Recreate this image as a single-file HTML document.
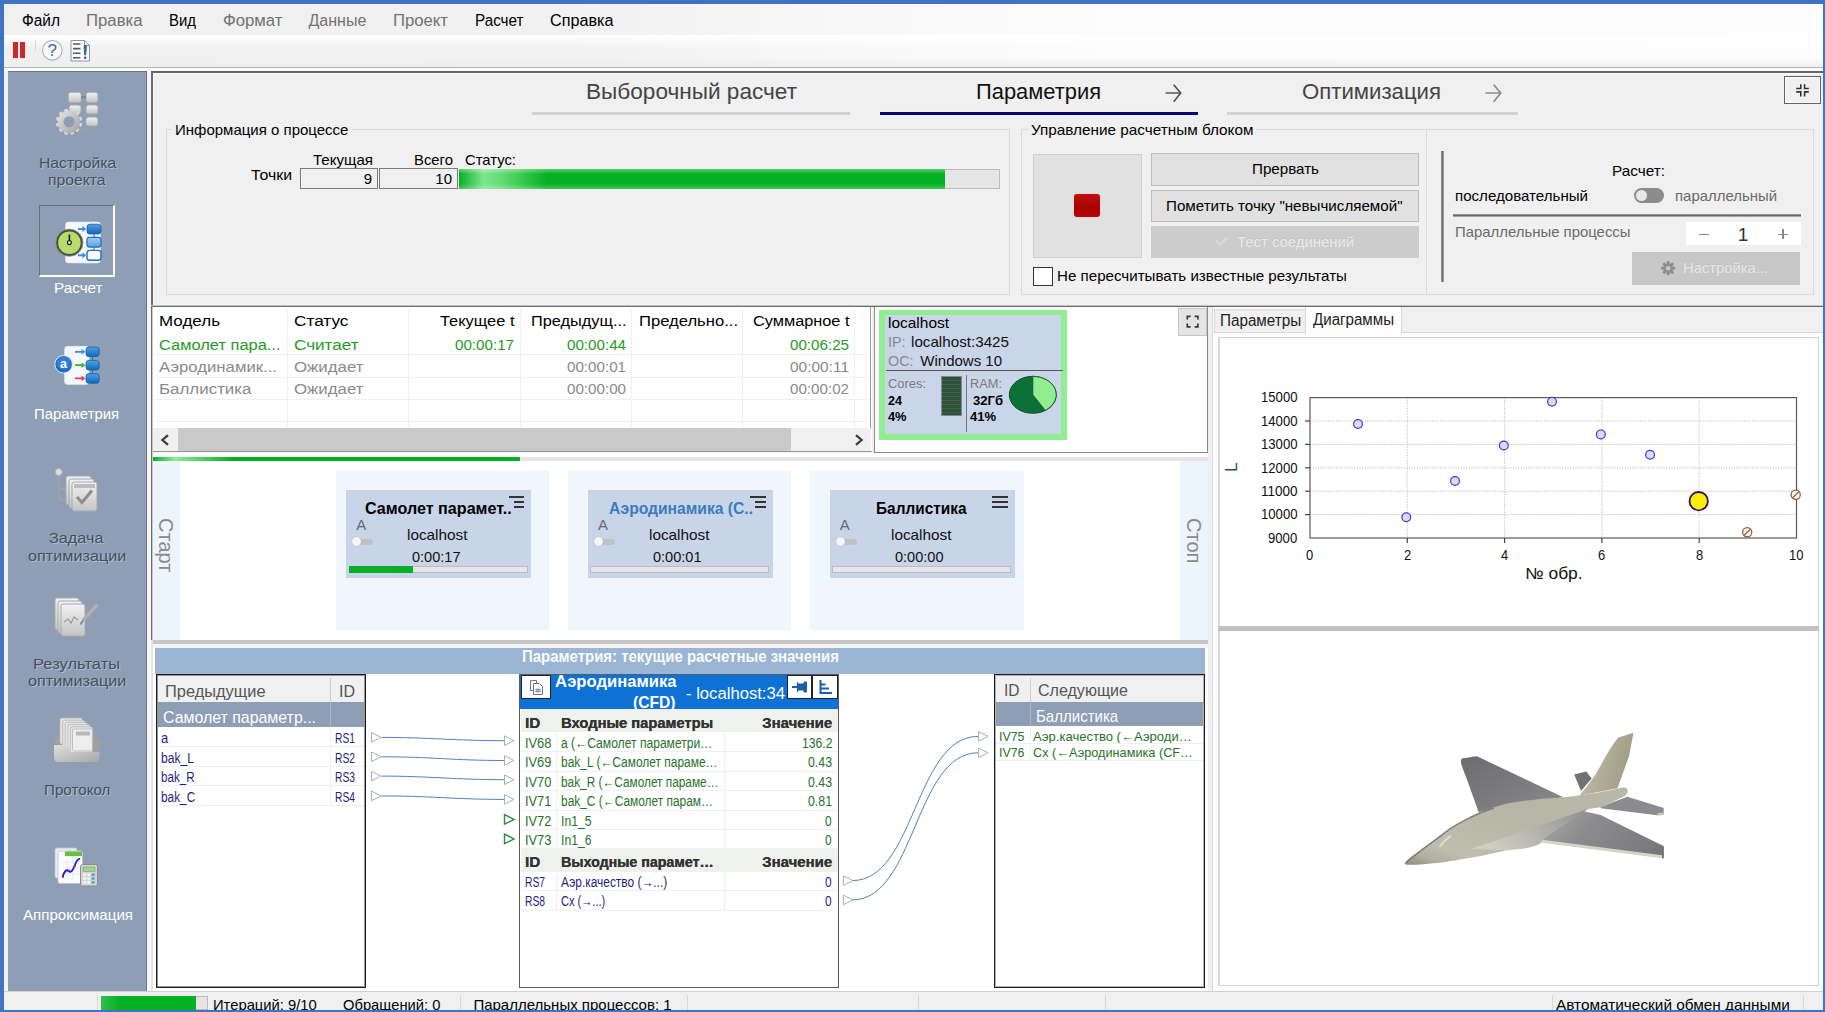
<!DOCTYPE html>
<html lang="ru"><head><meta charset="utf-8"><title>Параметрия</title>
<style>
html,body{margin:0;padding:0}
body{width:1825px;height:1012px;position:relative;overflow:hidden;background:#f0f0f0;font-family:"Liberation Sans",sans-serif}
.a{position:absolute;box-sizing:border-box}
.t{position:absolute;white-space:pre;line-height:1;transform-origin:0 0;display:block}
svg{position:absolute;overflow:visible}
</style></head><body>
<div class="a" style="left:0px;top:0px;width:1825px;height:1012px;background:#3f74c2;"></div>
<div class="a" style="left:4px;top:4px;width:1819px;height:1006px;background:#f0f0f0;"></div>
<div class="a" style="left:4px;top:4px;width:1819px;height:31px;background:linear-gradient(90deg,#f0f0f0 0,#f1f1f1 560px,#f7f7f7 800px,#fcfcfc 1100px,#fdfdfd 1819px);"></div>
<span class="t" style="left:21.50px;top:13.36px;font-size:16px;color:#000;transform:scaleX(0.9658);">Файл</span>
<span class="t" style="left:86.00px;top:13.36px;font-size:16px;color:#727272;transform:scaleX(1.0454);">Правка</span>
<span class="t" style="left:169.00px;top:13.36px;font-size:16px;color:#000;transform:scaleX(0.9325);">Вид</span>
<span class="t" style="left:222.50px;top:13.36px;font-size:16px;color:#727272;transform:scaleX(1.0467);">Формат</span>
<span class="t" style="left:308.50px;top:13.36px;font-size:16px;color:#727272;">Данные</span>
<span class="t" style="left:393.00px;top:13.36px;font-size:16px;color:#727272;transform:scaleX(1.0436);">Проект</span>
<span class="t" style="left:475.00px;top:13.36px;font-size:16px;color:#000;transform:scaleX(0.9530);">Расчет</span>
<span class="t" style="left:550.00px;top:13.36px;font-size:16px;color:#000;transform:scaleX(1.0117);">Справка</span>
<div class="a" style="left:4px;top:35px;width:1819px;height:33px;background:linear-gradient(90deg,#f0f0f0 0,#f1f1f1 560px,#f7f7f7 800px,#fcfcfc 1100px,#fdfdfd 1819px);"></div>
<div class="a" style="left:4px;top:35px;width:1819px;height:14px;background:linear-gradient(180deg,rgba(255,255,255,1) 0,rgba(255,255,255,.6) 5px,rgba(255,255,255,0) 14px);"></div>
<div class="a" style="left:4px;top:58px;width:1819px;height:9px;background:linear-gradient(180deg,rgba(240,240,240,0) 0,rgba(238,238,238,1) 9px);"></div>
<div class="a" style="left:4px;top:67px;width:1819px;height:1px;background:#b4b4b4;"></div>
<div class="a" style="left:4px;top:68px;width:1819px;height:3px;background:#fbfbfb;"></div>
<div class="a" style="left:13px;top:42px;width:5px;height:16px;background:#d0272b;"></div>
<div class="a" style="left:20px;top:42px;width:5px;height:16px;background:#d0272b;"></div>
<div class="a" style="left:35px;top:40px;width:1px;height:11px;background:#d8d8d8;"></div>
<div class="a" style="left:4px;top:71px;width:4px;height:921px;background:#f0f0f0;"></div>
<div class="a" style="left:8px;top:71px;width:139px;height:921px;background:#8e9fb5;"></div>
<div class="a" style="left:147px;top:71px;width:4px;height:921px;background:#f7f7f7;"></div>
<div class="a" style="left:8px;top:71px;width:139px;height:1px;background:#6a7586;"></div>
<div class="a" style="left:151px;top:71px;width:1672px;height:237px;background:#f0f0f0;border-left:2px solid #6a6a6a;border-top:2px solid #666;box-shadow:inset 1px 1px 0 #fbfbfb;"></div>
<div class="a" style="left:151px;top:306px;width:1672px;height:1px;background:#6a6a6a;"></div>
<div class="a" style="left:151px;top:305px;width:1672px;height:1px;background:#c4c4c4;"></div>
<span class="t" style="left:586.00px;top:80.98px;font-size:22px;color:#444;transform:scaleX(1.0272);">Выборочный расчет</span>
<div class="a" style="left:532px;top:112px;width:318px;height:3px;background:#d2d2d2;"></div>
<span class="t" style="left:975.50px;top:80.98px;font-size:22px;color:#111;transform:scaleX(0.9947);">Параметрия</span>
<div class="a" style="left:880px;top:112px;width:318px;height:3px;background:#06067a;"></div>
<span class="t" style="left:1301.50px;top:80.98px;font-size:22px;color:#444;transform:scaleX(1.0077);">Оптимизация</span>
<div class="a" style="left:1227px;top:112px;width:291px;height:3px;background:#d2d2d2;"></div>
<div class="a" style="left:1784px;top:76px;width:37px;height:28px;background:#f0f0f0;border:1px solid #626262;box-shadow:inset 0 0 0 1px #fafafa;"></div>
<div class="a" style="left:166px;top:129px;width:844px;height:166px;border:1px solid #dcdcdc;"></div>
<div class="a" style="left:172px;top:120px;width:180px;height:20px;background:#f0f0f0;"></div>
<span class="t" style="left:175.00px;top:122.30px;font-size:15px;color:#000;">Информация о процессе</span>
<span class="t" style="left:312.50px;top:152.30px;font-size:15px;color:#000;transform:scaleX(1.0050);">Текущая</span>
<span class="t" style="left:413.50px;top:152.30px;font-size:15px;color:#000;transform:scaleX(0.9913);">Всего</span>
<span class="t" style="left:465.00px;top:152.30px;font-size:15px;color:#000;transform:scaleX(0.9885);">Статус:</span>
<span class="t" style="left:251.00px;top:166.80px;font-size:15px;color:#000;transform:scaleX(1.0576);">Точки</span>
<div class="a" style="left:300px;top:168px;width:78px;height:21px;background:#f0f0f0;border:1px solid #7a7a7a;"></div>
<div class="a" style="left:379px;top:168px;width:79px;height:21px;background:#f0f0f0;border:1px solid #7a7a7a;"></div>
<span class="t" style="left:363.66px;top:171.30px;font-size:15px;color:#000;">9</span>
<span class="t" style="left:435.31px;top:171.30px;font-size:15px;color:#000;">10</span>
<div class="a" style="left:459px;top:169px;width:541px;height:20px;background:#e6e6e6;border:1px solid #bcbcbc;"></div>
<div class="a" style="left:459px;top:169px;width:486px;height:20px;background:linear-gradient(90deg,#06b025 0%,#7fe58f 5%,#5fdc72 9%,#06b025 18%,#06b025 100%);"></div>
<div class="a" style="left:459px;top:169px;width:486px;height:20px;background:linear-gradient(180deg,rgba(255,255,255,.35) 0%,rgba(255,255,255,0) 25%,rgba(255,255,255,0) 75%,rgba(255,255,255,.25) 100%);"></div>
<div class="a" style="left:1021px;top:129px;width:406px;height:166px;border:1px solid #dcdcdc;"></div>
<div class="a" style="left:1426px;top:129px;width:388px;height:166px;border:1px solid #dcdcdc;"></div>
<div class="a" style="left:1028px;top:120px;width:228px;height:20px;background:#f0f0f0;"></div>
<span class="t" style="left:1031.00px;top:122.30px;font-size:15px;color:#000;transform:scaleX(1.0196);">Управление расчетным блоком</span>
<div class="a" style="left:1033px;top:154px;width:109px;height:104px;background:#e1e1e1;border:1px solid #cfcfcf;"></div>
<div class="a" style="left:1074px;top:194px;width:26px;height:23px;border-radius:3px;background:linear-gradient(180deg,#c21010 0%,#a80000 60%,#b80808 100%);box-shadow:0 0 1px #d88;"></div>
<div class="a" style="left:1151px;top:153px;width:268px;height:33px;background:#e1e1e1;border:1px solid #bdbdbd;"></div>
<span class="t" style="left:1252.00px;top:161.30px;font-size:15px;color:#000;transform:scaleX(1.0104);">Прервать</span>
<div class="a" style="left:1151px;top:190px;width:268px;height:32px;background:#e1e1e1;border:1px solid #bdbdbd;"></div>
<span class="t" style="left:1166.25px;top:197.70px;font-size:15px;color:#000;transform:scaleX(1.0095);">Пометить точку &quot;невычисляемой&quot;</span>
<div class="a" style="left:1151px;top:226px;width:268px;height:32px;background:#cccccc;"></div>
<span class="t" style="left:1237.00px;top:233.90px;font-size:15px;color:#e9e9e9;transform:scaleX(0.9913);text-shadow:-0.6px -0.6px 0 #c4c4c4;">Тест соединений</span>
<svg class="a" style="left:1214px;top:234px" width="14" height="12" viewBox="0 0 14 12"><path d="M1.5 6 L6 10.5 L13 4" fill="none" stroke="#dcdcdc" stroke-width="1.8"/></svg>
<div class="a" style="left:1033px;top:267px;width:20px;height:19px;background:#fff;border:1px solid #333;"></div>
<span class="t" style="left:1057.00px;top:268.10px;font-size:15px;color:#000;transform:scaleX(1.0080);">Не пересчитывать известные результаты</span>
<div class="a" style="left:1441px;top:151px;width:3px;height:131px;background:linear-gradient(90deg,#b0b0b0,#6a6a6a 40%,#6a6a6a 60%,#c8c8c8);"></div>
<span class="t" style="left:1612.00px;top:163.30px;font-size:15px;color:#000;transform:scaleX(1.0214);">Расчет:</span>
<span class="t" style="left:1455.00px;top:188.30px;font-size:15px;color:#000;transform:scaleX(1.0060);">последовательный</span>
<div class="a" style="left:1634px;top:188px;width:30px;height:15px;background:#8c8c8c;border-radius:8px;"></div>
<div class="a" style="left:1636px;top:190px;width:11px;height:11px;background:#e8e8e8;border-radius:6px;"></div>
<span class="t" style="left:1675.00px;top:188.30px;font-size:15px;color:#6a6a6a;transform:scaleX(0.9950);">параллельный</span>
<div class="a" style="left:1453px;top:214px;width:348px;height:3px;background:linear-gradient(180deg,#b0b0b0,#6a6a6a 40%,#6a6a6a 60%,#d0d0d0);"></div>
<span class="t" style="left:1455.00px;top:224.30px;font-size:15px;color:#6a6a6a;transform:scaleX(0.9935);">Параллельные процессы</span>
<div class="a" style="left:1686px;top:222px;width:115px;height:23px;background:#fff;"></div>
<div class="a" style="left:1699px;top:233.5px;width:10px;height:1.5px;background:#8a8a8a;"></div>
<span class="t" style="left:1737.71px;top:224.52px;font-size:19px;color:#333;">1</span>
<div class="a" style="left:1778px;top:233.5px;width:10px;height:1.5px;background:#8a8a8a;"></div>
<div class="a" style="left:1782.3px;top:229px;width:1.5px;height:10px;background:#8a8a8a;"></div>
<div class="a" style="left:1632px;top:252px;width:168px;height:33px;background:#c8c8c8;"></div>
<span class="t" style="left:1683.00px;top:260.30px;font-size:15px;color:#e6e6e6;transform:scaleX(0.9843);text-shadow:-0.6px -0.6px 0 #c0c0c0;">Настройка...</span>
<div class="a" style="left:153px;top:307px;width:719px;height:145px;background:#fff;"></div>
<div class="a" style="left:151px;top:307px;width:1px;height:333px;background:#6a6a6a;"></div>
<div class="a" style="left:152px;top:307px;width:1px;height:333px;background:#c8c8c8;"></div>
<div class="a" style="left:151px;top:640px;width:2px;height:352px;background:#e4e4e4;"></div>
<div class="a" style="left:153px;top:451px;width:719px;height:1px;background:#9a9a9a;"></div>
<div class="a" style="left:870px;top:307px;width:1px;height:145px;background:#9a9a9a;"></div>
<div class="a" style="left:287px;top:309px;width:1px;height:119px;background:#f0f0f0;"></div>
<div class="a" style="left:408px;top:309px;width:1px;height:119px;background:#f0f0f0;"></div>
<div class="a" style="left:520px;top:309px;width:1px;height:119px;background:#f0f0f0;"></div>
<div class="a" style="left:631px;top:309px;width:1px;height:119px;background:#f0f0f0;"></div>
<div class="a" style="left:742px;top:309px;width:1px;height:119px;background:#f0f0f0;"></div>
<div class="a" style="left:854px;top:309px;width:1px;height:119px;background:#f0f0f0;"></div>
<div class="a" style="left:154px;top:354px;width:716px;height:1px;background:#f0f0f0;"></div>
<div class="a" style="left:154px;top:377px;width:716px;height:1px;background:#f0f0f0;"></div>
<div class="a" style="left:154px;top:399px;width:716px;height:1px;background:#f0f0f0;"></div>
<div class="a" style="left:154px;top:421px;width:716px;height:1px;background:#f0f0f0;"></div>
<span class="t" style="left:159.20px;top:314.45px;font-size:14px;color:#000;transform:scaleX(1.2136);">Модель</span>
<span class="t" style="left:293.60px;top:314.45px;font-size:14px;color:#000;transform:scaleX(1.2312);">Статус</span>
<span class="t" style="left:439.80px;top:314.45px;font-size:14px;color:#000;transform:scaleX(1.1724);">Текущее t</span>
<span class="t" style="left:530.70px;top:314.45px;font-size:14px;color:#000;transform:scaleX(1.1657);">Предыдущ...</span>
<span class="t" style="left:638.50px;top:314.45px;font-size:14px;color:#000;transform:scaleX(1.1861);">Предельно...</span>
<span class="t" style="left:752.50px;top:314.45px;font-size:14px;color:#000;transform:scaleX(1.1646);">Суммарное t</span>
<span class="t" style="left:159.20px;top:338.15px;font-size:14px;color:#1f9c1f;transform:scaleX(1.1732);">Самолет пара...</span>
<span class="t" style="left:293.60px;top:338.15px;font-size:14px;color:#1f9c1f;transform:scaleX(1.2206);">Считает</span>
<span class="t" style="left:455.30px;top:338.15px;font-size:14px;color:#1f9c1f;transform:scaleX(1.0826);">00:00:17</span>
<span class="t" style="left:567.00px;top:338.15px;font-size:14px;color:#1f9c1f;transform:scaleX(1.0826);">00:00:44</span>
<span class="t" style="left:790.00px;top:338.15px;font-size:14px;color:#1f9c1f;transform:scaleX(1.0826);">00:06:25</span>
<span class="t" style="left:159.20px;top:360.15px;font-size:14px;color:#8a8a8a;transform:scaleX(1.1942);">Аэродинамик...</span>
<span class="t" style="left:293.60px;top:360.15px;font-size:14px;color:#8a8a8a;transform:scaleX(1.2031);">Ожидает</span>
<span class="t" style="left:567.00px;top:360.15px;font-size:14px;color:#8a8a8a;transform:scaleX(1.0826);">00:00:01</span>
<span class="t" style="left:790.00px;top:360.15px;font-size:14px;color:#8a8a8a;transform:scaleX(1.1034);">00:00:11</span>
<span class="t" style="left:159.20px;top:382.45px;font-size:14px;color:#8a8a8a;transform:scaleX(1.2077);">Баллистика</span>
<span class="t" style="left:293.60px;top:382.45px;font-size:14px;color:#8a8a8a;transform:scaleX(1.2031);">Ожидает</span>
<span class="t" style="left:567.00px;top:382.45px;font-size:14px;color:#8a8a8a;transform:scaleX(1.0826);">00:00:00</span>
<span class="t" style="left:790.00px;top:382.45px;font-size:14px;color:#8a8a8a;transform:scaleX(1.0826);">00:00:02</span>
<div class="a" style="left:153px;top:428px;width:718px;height:23px;background:#f0f0f0;"></div>
<div class="a" style="left:178px;top:428px;width:613px;height:23px;background:#c9c9c9;"></div>
<svg class="a" style="left:159px;top:433px" width="12" height="14" viewBox="0 0 12 14"><path d="M9 2.2 L3.4 7 L9 11.8" fill="none" stroke="#404040" stroke-width="2.3"/></svg>
<svg class="a" style="left:853px;top:433px" width="12" height="14" viewBox="0 0 12 14"><path d="M3 2.2 L8.6 7 L3 11.8" fill="none" stroke="#404040" stroke-width="2.3"/></svg>
<div class="a" style="left:874px;top:307px;width:334px;height:146px;background:#fff;border:1px solid #8a8a8a;border-top:none;"></div>
<div class="a" style="left:879px;top:310px;width:188px;height:130px;background:#c9d5e8;border:6px solid #90ee90;border-top-width:5px;"></div>
<span class="t" style="left:888.00px;top:315.30px;font-size:15px;color:#000;transform:scaleX(1.0304);">localhost</span>
<span class="t" style="left:888.00px;top:334.00px;font-size:15px;color:#8a8a8a;transform:scaleX(0.9540);">IP:</span>
<span class="t" style="left:911.00px;top:334.00px;font-size:15px;color:#111;transform:scaleX(1.0129);">localhost:3425</span>
<span class="t" style="left:888.00px;top:352.60px;font-size:15px;color:#8a8a8a;transform:scaleX(0.9561);">ОС:</span>
<span class="t" style="left:920.30px;top:352.60px;font-size:15px;color:#111;">Windows 10</span>
<div class="a" style="left:886px;top:370px;width:177px;height:1px;background:#555;"></div>
<span class="t" style="left:887.80px;top:377.54px;font-size:12px;color:#7a7a7a;transform:scaleX(1.0752);">Cores:</span>
<span class="t" style="left:887.80px;top:394.64px;font-size:12px;color:#000;font-weight:bold;transform:scaleX(1.0480);">24</span>
<span class="t" style="left:887.80px;top:411.04px;font-size:12px;color:#000;font-weight:bold;transform:scaleX(1.0667);">4%</span>
<div class="a" style="left:941px;top:376px;width:21px;height:40px;border:1px solid #7d8a88;background:repeating-linear-gradient(180deg,#2d5139 0,#2d5139 3px,#3d6349 3px,#3d6349 4px);"></div>
<div class="a" style="left:966px;top:375px;width:1px;height:57px;background:#7a7a7a;"></div>
<span class="t" style="left:970.20px;top:377.54px;font-size:12px;color:#7a7a7a;transform:scaleX(1.0667);">RAM:</span>
<span class="t" style="left:973.30px;top:394.64px;font-size:12px;color:#000;font-weight:bold;transform:scaleX(1.0884);">32Гб</span>
<span class="t" style="left:970.20px;top:411.04px;font-size:12px;color:#000;font-weight:bold;transform:scaleX(1.0819);">41%</span>
<svg class="a" style="left:0;top:0" width="1825" height="1012"><ellipse cx="1032.8" cy="394.8" rx="23.5" ry="18.5" fill="#0a7236" stroke="#1c4a2a" stroke-width="1"/><path d="M1032.8 394.8 L1032.8 376.3 A23.5 18.5 0 0 1 1045.39 410.42 Z" fill="#90ee90" stroke="#1c4a2a" stroke-width="0.8"/></svg>
<div class="a" style="left:1178px;top:308px;width:29px;height:28px;background:#e4e4e4;border:1px solid #c6c6c6;"></div>
<svg class="a" style="left:1186px;top:315px" width="14" height="14" viewBox="0 0 14 14"><path d="M1.3 4.6 V1.3 H4.6 M8.6 1.3 H11.9 V4.6 M11.9 8.6 V11.9 H8.6 M4.6 11.9 H1.3 V8.6" fill="none" stroke="#3a3a3a" stroke-width="1.7"/></svg>
<div class="a" style="left:1208px;top:307px;width:5px;height:685px;background:#f0f0f0;"></div>
<div class="a" style="left:153px;top:453px;width:1055px;height:4px;background:#fff;"></div>
<div class="a" style="left:153px;top:457px;width:1055px;height:4px;background:#e6e6e6;"></div>
<div class="a" style="left:153px;top:457px;width:367px;height:4px;background:linear-gradient(90deg,#06b025 0%,#8fe89a 6%,#06b025 22%,#06b025 100%);"></div>
<div class="a" style="left:153px;top:461px;width:1055px;height:179px;background:#fff;"></div>
<div class="a" style="left:153px;top:461px;width:27px;height:179px;background:#ecf4fc;"></div>
<div class="a" style="left:1180px;top:461px;width:28px;height:179px;background:#ecf4fc;"></div>
<span class="t" style="left:0.00px;top:-16.93px;font-size:20px;color:#8a8a8a;transform:scaleX(1.0118);left:175.5px;top:518px;transform-origin:0 0;transform:rotate(90deg);">Старт</span>
<span class="t" style="left:0.00px;top:-16.93px;font-size:20px;color:#8a8a8a;transform:scaleX(0.9924);left:1204px;top:518px;transform-origin:0 0;transform:rotate(90deg);">Стоп</span>
<div class="a" style="left:336px;top:471px;width:213px;height:159px;background:#eff6fe;"></div>
<div class="a" style="left:346px;top:490px;width:185px;height:88px;background:#c8d5e8;"></div>
<span class="t" style="left:365.00px;top:500.86px;font-size:16px;color:#000;font-weight:bold;transform:scaleX(1.0072);">Самолет парамет..</span>
<div class="a" style="left:508.5px;top:496px;width:15.5px;height:1.7px;background:#333;"></div>
<div class="a" style="left:513.5px;top:501px;width:10.5px;height:1.7px;background:#333;"></div>
<div class="a" style="left:513.5px;top:506px;width:10.5px;height:1.7px;background:#333;"></div>
<span class="t" style="left:356.30px;top:516.80px;font-size:15px;color:#6a6a6a;">A</span>
<div class="a" style="left:354px;top:539px;width:19px;height:5.5px;background:#c2c2c2;border-radius:3px;"></div>
<div class="a" style="left:352px;top:537px;width:9px;height:9px;background:#f6f6f6;border-radius:5px;box-shadow:0 0 1px #999;"></div>
<span class="t" style="left:407.25px;top:526.60px;font-size:15px;color:#111;transform:scaleX(1.0219);">localhost</span>
<span class="t" style="left:411.55px;top:549.20px;font-size:15px;color:#111;transform:scaleX(0.9691);">0:00:17</span>
<div class="a" style="left:348.5px;top:565.6px;width:179px;height:7px;background:#e6e6e6;border:1px solid #bcbcbc;"></div>
<div class="a" style="left:348.5px;top:565.6px;width:64.5px;height:7px;background:#06b025;"></div>
<div class="a" style="left:568.3px;top:471px;width:223px;height:159px;background:#eff6fe;"></div>
<div class="a" style="left:587.7px;top:490px;width:185px;height:88px;background:#c8d5e8;"></div>
<span class="t" style="left:608.70px;top:500.86px;font-size:16px;color:#3b7cc0;font-weight:bold;transform:scaleX(0.9777);">Аэродинамика (С..</span>
<div class="a" style="left:750.2px;top:496px;width:15.5px;height:1.7px;background:#333;"></div>
<div class="a" style="left:755.2px;top:501px;width:10.5px;height:1.7px;background:#333;"></div>
<div class="a" style="left:755.2px;top:506px;width:10.5px;height:1.7px;background:#333;"></div>
<span class="t" style="left:598.00px;top:516.80px;font-size:15px;color:#6a6a6a;">A</span>
<div class="a" style="left:595.7px;top:539px;width:19px;height:5.5px;background:#c2c2c2;border-radius:3px;"></div>
<div class="a" style="left:593.7px;top:537px;width:9px;height:9px;background:#f6f6f6;border-radius:5px;box-shadow:0 0 1px #999;"></div>
<span class="t" style="left:648.95px;top:526.60px;font-size:15px;color:#111;transform:scaleX(1.0219);">localhost</span>
<span class="t" style="left:653.25px;top:549.20px;font-size:15px;color:#111;transform:scaleX(0.9691);">0:00:01</span>
<div class="a" style="left:590.2px;top:565.6px;width:179px;height:7px;background:#e6e6e6;border:1px solid #bcbcbc;"></div>
<div class="a" style="left:810px;top:471px;width:214px;height:159px;background:#eff6fe;"></div>
<div class="a" style="left:829.5px;top:490px;width:185px;height:88px;background:#c8d5e8;"></div>
<span class="t" style="left:876.40px;top:500.86px;font-size:16px;color:#000;font-weight:bold;transform:scaleX(0.9623);">Баллистика</span>
<div class="a" style="left:992.0px;top:496px;width:15.5px;height:1.7px;background:#333;"></div>
<div class="a" style="left:992.0px;top:501px;width:15.5px;height:1.7px;background:#333;"></div>
<div class="a" style="left:992.0px;top:506px;width:15.5px;height:1.7px;background:#333;"></div>
<span class="t" style="left:839.80px;top:516.80px;font-size:15px;color:#6a6a6a;">A</span>
<div class="a" style="left:837.5px;top:539px;width:19px;height:5.5px;background:#c2c2c2;border-radius:3px;"></div>
<div class="a" style="left:835.5px;top:537px;width:9px;height:9px;background:#f6f6f6;border-radius:5px;box-shadow:0 0 1px #999;"></div>
<span class="t" style="left:890.75px;top:526.60px;font-size:15px;color:#111;transform:scaleX(1.0219);">localhost</span>
<span class="t" style="left:895.05px;top:549.20px;font-size:15px;color:#111;transform:scaleX(0.9691);">0:00:00</span>
<div class="a" style="left:832.0px;top:565.6px;width:179px;height:7px;background:#e6e6e6;border:1px solid #bcbcbc;"></div>
<div class="a" style="left:153px;top:640px;width:1055px;height:4px;background:#c6c6c6;"></div>
<div class="a" style="left:153px;top:644px;width:1055px;height:4px;background:#f4f4f4;"></div>
<div class="a" style="left:153px;top:648px;width:1055px;height:344px;background:#fff;"></div>
<div class="a" style="left:155px;top:648px;width:1049.5px;height:26px;background:#9bb5d5;"></div>
<span class="t" style="left:522.30px;top:649.26px;font-size:16px;color:#fff;font-weight:bold;transform:scaleX(0.9344);opacity:.95;">Параметрия: текущие расчетные значения</span>
<div class="a" style="left:156px;top:674px;width:210px;height:314px;background:#fff;border:1px solid #1c1c1c;box-shadow:inset 0 0 0 1px rgba(0,0,0,.42);"></div>
<div class="a" style="left:158px;top:676px;width:206px;height:26px;background:#f0f0f0;"></div>
<div class="a" style="left:330px;top:678px;width:1px;height:24px;background:#d0d0d0;"></div>
<span class="t" style="left:165.20px;top:683.11px;font-size:17px;color:#555;transform:scaleX(0.9640);">Предыдущие</span>
<span class="t" style="left:339.00px;top:683.11px;font-size:17px;color:#555;transform:scaleX(0.9412);">ID</span>
<div class="a" style="left:158px;top:702px;width:206px;height:25px;background:#8d9eb5;"></div>
<div class="a" style="left:330px;top:702px;width:1px;height:25px;background:#a8b6c8;"></div>
<span class="t" style="left:162.50px;top:708.61px;font-size:17px;color:#fff;transform:scaleX(0.9353);">Самолет параметр...</span>
<span class="t" style="left:160.80px;top:730.95px;font-size:14px;color:#1f1f7e;transform:scaleX(0.9234);">a</span>
<span class="t" style="left:335.30px;top:730.95px;font-size:14px;color:#1f1f7e;transform:scaleX(0.7344);">RS1</span>
<span class="t" style="left:160.80px;top:750.75px;font-size:14px;color:#1f1f7e;transform:scaleX(0.8622);">bak_L</span>
<span class="t" style="left:335.30px;top:750.75px;font-size:14px;color:#1f1f7e;transform:scaleX(0.7344);">RS2</span>
<span class="t" style="left:160.80px;top:769.85px;font-size:14px;color:#1f1f7e;transform:scaleX(0.8327);">bak_R</span>
<span class="t" style="left:335.30px;top:769.85px;font-size:14px;color:#1f1f7e;transform:scaleX(0.7344);">RS3</span>
<span class="t" style="left:160.80px;top:789.65px;font-size:14px;color:#1f1f7e;transform:scaleX(0.8451);">bak_C</span>
<span class="t" style="left:335.30px;top:789.65px;font-size:14px;color:#1f1f7e;transform:scaleX(0.7344);">RS4</span>
<div class="a" style="left:158px;top:746px;width:206px;height:1px;background:#f0f0f0;"></div>
<div class="a" style="left:158px;top:765.5px;width:206px;height:1px;background:#f0f0f0;"></div>
<div class="a" style="left:158px;top:785px;width:206px;height:1px;background:#f0f0f0;"></div>
<div class="a" style="left:158px;top:804.5px;width:206px;height:1px;background:#f0f0f0;"></div>
<div class="a" style="left:330px;top:727px;width:1px;height:78px;background:#f0f0f0;"></div>
<div class="a" style="left:519px;top:674px;width:320px;height:314px;background:#fff;border:1px solid #5a5a5a;"></div>
<div class="a" style="left:520px;top:675px;width:318px;height:34px;background:#0e71d6;"></div>
<div class="a" style="left:521px;top:675px;width:30px;height:24px;background:#fff;border:1px solid #222;"></div>
<div class="a" style="left:787px;top:675px;width:25px;height:24px;background:#fff;border:1px solid #222;"></div>
<div class="a" style="left:812px;top:675px;width:26px;height:24px;background:#fff;border:1px solid #222;"></div>
<span class="t" style="left:554.50px;top:673.33px;font-size:16.5px;color:#fff;font-weight:bold;transform:scaleX(1.0065);">Аэродинамика</span>
<div class="a" style="left:600px;top:690px;width:120px;height:19px;overflow:hidden">
<span class="t" style="left:33.20px;top:4.03px;font-size:16.5px;color:#fff;font-weight:bold;transform:scaleX(0.9464);">(CFD)</span>
</div>
<span class="t" style="left:686.30px;top:685.76px;font-size:16px;color:#fff;transform:scaleX(1.0402);">- localhost:34</span>
<svg class="a" style="left:529px;top:679px" width="16" height="17" viewBox="0 0 16 17"><path d="M1.5 1.5 H7.5 V4 M1.5 1.5 V11.5 H4" fill="none" stroke="#777" stroke-width="1"/><path d="M4.5 4.5 H10.5 L13.5 7.5 V15.5 H4.5 Z" fill="#fff" stroke="#777" stroke-width="1"/><path d="M6.5 10.5 H11.5 M6.5 12.5 H11.5" stroke="#6f8fb5" stroke-width="1.4"/></svg>
<svg class="a" style="left:791px;top:680px" width="18" height="14" viewBox="0 0 18 14"><path d="M1 7 H6" stroke="#1d5fa8" stroke-width="2"/><path d="M6.5 2 V12 M6.5 4 H13 V2 L15.5 2 V12 H13 V10 H6.5 Z" fill="#1d5fa8" stroke="#1d5fa8" stroke-width="1"/></svg>
<svg class="a" style="left:818px;top:679px" width="16" height="16" viewBox="0 0 16 16"><path d="M2.5 1 V14 H14" fill="none" stroke="#1d5fa8" stroke-width="2"/><path d="M3 5.5 H7.5 M3 9.5 H11" stroke="#1d5fa8" stroke-width="2"/></svg>
<div class="a" style="left:520.5px;top:709px;width:317px;height:23px;background:#eff1ec;"></div>
<span class="t" style="left:525.00px;top:715.95px;font-size:14px;color:#333;font-weight:bold;transform:scaleX(1.0714);text-shadow:0.35px 0 0 #333;">ID</span>
<span class="t" style="left:561.40px;top:715.95px;font-size:14px;color:#333;font-weight:bold;transform:scaleX(1.0511);text-shadow:0.35px 0 0 #333;">Входные параметры</span>
<span class="t" style="left:761.50px;top:715.95px;font-size:14px;color:#333;font-weight:bold;transform:scaleX(1.0697);text-shadow:0.35px 0 0 #333;">Значение</span>
<div class="a" style="left:520.5px;top:848.5px;width:317px;height:23px;background:#eff1ec;"></div>
<span class="t" style="left:525.00px;top:855.35px;font-size:14px;color:#333;font-weight:bold;transform:scaleX(1.0714);text-shadow:0.35px 0 0 #333;">ID</span>
<span class="t" style="left:561.40px;top:855.35px;font-size:14px;color:#333;font-weight:bold;transform:scaleX(1.0156);text-shadow:0.35px 0 0 #333;">Выходные парамет…</span>
<span class="t" style="left:761.50px;top:855.35px;font-size:14px;color:#333;font-weight:bold;transform:scaleX(1.0697);text-shadow:0.35px 0 0 #333;">Значение</span>
<span class="t" style="left:525.00px;top:736.15px;font-size:14px;color:#27722a;transform:scaleX(0.9163);">IV68</span>
<span class="t" style="left:561.40px;top:736.15px;font-size:14px;color:#27722a;transform:scaleX(0.8641);">a (←Самолет параметри…</span>
<span class="t" style="left:801.50px;top:736.15px;font-size:14px;color:#27722a;transform:scaleX(0.8703);">136.2</span>
<span class="t" style="left:525.00px;top:755.45px;font-size:14px;color:#27722a;transform:scaleX(0.9163);">IV69</span>
<span class="t" style="left:561.40px;top:755.45px;font-size:14px;color:#27722a;transform:scaleX(0.8529);">bak_L (←Самолет параме…</span>
<span class="t" style="left:808.00px;top:755.45px;font-size:14px;color:#27722a;transform:scaleX(0.8807);">0.43</span>
<span class="t" style="left:525.00px;top:774.85px;font-size:14px;color:#27722a;transform:scaleX(0.9163);">IV70</span>
<span class="t" style="left:561.40px;top:774.85px;font-size:14px;color:#27722a;transform:scaleX(0.8453);">bak_R (←Самолет параме…</span>
<span class="t" style="left:808.00px;top:774.85px;font-size:14px;color:#27722a;transform:scaleX(0.8807);">0.43</span>
<span class="t" style="left:525.00px;top:794.35px;font-size:14px;color:#27722a;transform:scaleX(0.9163);">IV71</span>
<span class="t" style="left:561.40px;top:794.35px;font-size:14px;color:#27722a;transform:scaleX(0.8513);">bak_C (←Самолет парам…</span>
<span class="t" style="left:808.00px;top:794.35px;font-size:14px;color:#27722a;transform:scaleX(0.8807);">0.81</span>
<span class="t" style="left:525.00px;top:813.85px;font-size:14px;color:#27722a;transform:scaleX(0.9163);">IV72</span>
<span class="t" style="left:561.40px;top:813.85px;font-size:14px;color:#27722a;transform:scaleX(0.8703);">In1_5</span>
<span class="t" style="left:825.40px;top:813.85px;font-size:14px;color:#27722a;transform:scaleX(0.8465);">0</span>
<span class="t" style="left:525.00px;top:833.35px;font-size:14px;color:#27722a;transform:scaleX(0.9163);">IV73</span>
<span class="t" style="left:561.40px;top:833.35px;font-size:14px;color:#27722a;transform:scaleX(0.8703);">In1_6</span>
<span class="t" style="left:825.40px;top:833.35px;font-size:14px;color:#27722a;transform:scaleX(0.8465);">0</span>
<span class="t" style="left:525.00px;top:874.95px;font-size:14px;color:#1f1f7e;transform:scaleX(0.7344);">RS7</span>
<span class="t" style="left:561.40px;top:874.95px;font-size:14px;color:#1f1f7e;transform:scaleX(0.8508);">Аэр.качество (→...)</span>
<span class="t" style="left:825.40px;top:874.95px;font-size:14px;color:#1f1f7e;transform:scaleX(0.8465);">0</span>
<span class="t" style="left:525.00px;top:894.25px;font-size:14px;color:#1f1f7e;transform:scaleX(0.7344);">RS8</span>
<span class="t" style="left:561.40px;top:894.25px;font-size:14px;color:#1f1f7e;transform:scaleX(0.7893);">Cx (→...)</span>
<span class="t" style="left:825.40px;top:894.25px;font-size:14px;color:#1f1f7e;transform:scaleX(0.8465);">0</span>
<div class="a" style="left:521px;top:751px;width:316px;height:1px;background:#f0f0f0;"></div>
<div class="a" style="left:521px;top:770.5px;width:316px;height:1px;background:#f0f0f0;"></div>
<div class="a" style="left:521px;top:790px;width:316px;height:1px;background:#f0f0f0;"></div>
<div class="a" style="left:521px;top:809.5px;width:316px;height:1px;background:#f0f0f0;"></div>
<div class="a" style="left:521px;top:829px;width:316px;height:1px;background:#f0f0f0;"></div>
<div class="a" style="left:521px;top:848px;width:316px;height:1px;background:#f0f0f0;"></div>
<div class="a" style="left:521px;top:890px;width:316px;height:1px;background:#f0f0f0;"></div>
<div class="a" style="left:521px;top:909.5px;width:316px;height:1px;background:#f0f0f0;"></div>
<div class="a" style="left:556px;top:709px;width:1px;height:201px;background:#f0f0f0;"></div>
<div class="a" style="left:724px;top:709px;width:1px;height:201px;background:#f0f0f0;"></div>
<div class="a" style="left:994px;top:674px;width:211px;height:314px;background:#fff;border:1px solid #1c1c1c;box-shadow:inset 0 0 0 1px rgba(0,0,0,.3);"></div>
<div class="a" style="left:996px;top:676px;width:207px;height:26px;background:#f0f0f0;"></div>
<div class="a" style="left:1030px;top:678px;width:1px;height:24px;background:#d0d0d0;"></div>
<span class="t" style="left:1004.20px;top:681.91px;font-size:17px;color:#555;transform:scaleX(0.9118);">ID</span>
<span class="t" style="left:1038.20px;top:681.91px;font-size:17px;color:#555;transform:scaleX(0.9435);">Следующие</span>
<div class="a" style="left:996px;top:702px;width:207px;height:24px;background:#8d9eb5;"></div>
<div class="a" style="left:1030px;top:702px;width:1px;height:24px;background:#a8b6c8;"></div>
<span class="t" style="left:1036.00px;top:708.21px;font-size:17px;color:#fff;transform:scaleX(0.8839);">Баллистика</span>
<div class="a" style="left:996px;top:726px;width:207px;height:17px;overflow:hidden">
<span class="t" style="left:3.20px;top:3.77px;font-size:13.5px;color:#27722a;transform:scaleX(0.9143);">IV75</span>
<span class="t" style="left:37.40px;top:3.77px;font-size:13.5px;color:#27722a;transform:scaleX(0.9650);">Аэр.качество (←Аэроди…</span>
</div><div class="a" style="left:996px;top:743.5px;width:207px;height:16.5px;overflow:hidden">
<span class="t" style="left:3.20px;top:2.67px;font-size:13.5px;color:#27722a;transform:scaleX(0.9143);">IV76</span>
<span class="t" style="left:37.40px;top:2.67px;font-size:13.5px;color:#27722a;transform:scaleX(0.9410);">Cx (←Аэродинамика (CF…</span>
</div>
<div class="a" style="left:996px;top:743px;width:207px;height:1px;background:#f0f0f0;"></div>
<div class="a" style="left:996px;top:760px;width:207px;height:1px;background:#f0f0f0;"></div>
<div class="a" style="left:1030px;top:726px;width:1px;height:34px;background:#f0f0f0;"></div>
<svg class="a" style="left:0;top:0" width="1825" height="1012" fill="none"><path d="M381.5 737.4 C430 737.4 455 740.7 504 740.7" stroke="#4f82b8" stroke-width="1"/><path d="M371.5 732.6 L381.0 737.4 L371.5 742.1999999999999 Z" stroke="#a8aeb6" stroke-width="1" fill="#fff"/><path d="M504.5 735.9000000000001 L514.0 740.7 L504.5 745.5 Z" stroke="#a8aeb6" stroke-width="1" fill="#fff"/><path d="M381.5 756.8 C430 756.8 455 760.5 504 760.5" stroke="#4f82b8" stroke-width="1"/><path d="M371.5 752.0 L381.0 756.8 L371.5 761.5999999999999 Z" stroke="#a8aeb6" stroke-width="1" fill="#fff"/><path d="M504.5 755.7 L514.0 760.5 L504.5 765.3 Z" stroke="#a8aeb6" stroke-width="1" fill="#fff"/><path d="M381.5 776.1 C430 776.1 455 779.7 504 779.7" stroke="#4f82b8" stroke-width="1"/><path d="M371.5 771.3000000000001 L381.0 776.1 L371.5 780.9 Z" stroke="#a8aeb6" stroke-width="1" fill="#fff"/><path d="M504.5 774.9000000000001 L514.0 779.7 L504.5 784.5 Z" stroke="#a8aeb6" stroke-width="1" fill="#fff"/><path d="M381.5 795.9 C430 795.9 455 799.4 504 799.4" stroke="#4f82b8" stroke-width="1"/><path d="M371.5 791.1 L381.0 795.9 L371.5 800.6999999999999 Z" stroke="#a8aeb6" stroke-width="1" fill="#fff"/><path d="M504.5 794.6 L514.0 799.4 L504.5 804.1999999999999 Z" stroke="#a8aeb6" stroke-width="1" fill="#fff"/><path d="M504.5 814.6 L514.0 819.4 L504.5 824.1999999999999 Z" stroke="#2e8b3e" stroke-width="1.4" fill="#fff"/><path d="M504.5 834.1 L514.0 838.9 L504.5 843.6999999999999 Z" stroke="#2e8b3e" stroke-width="1.4" fill="#fff"/><path d="M852.5 880.6 C915 880.6 915 736.4 978 736.4" stroke="#4f82b8" stroke-width="1"/><path d="M843.3 875.8000000000001 L852.8 880.6 L843.3 885.4 Z" stroke="#a8aeb6" stroke-width="1" fill="#fff"/><path d="M978.6 731.6 L988.1 736.4 L978.6 741.1999999999999 Z" stroke="#a8aeb6" stroke-width="1" fill="#fff"/><path d="M852.5 899.9 C915 899.9 915 752.8 978 752.8" stroke="#4f82b8" stroke-width="1"/><path d="M843.3 895.1 L852.8 899.9 L843.3 904.6999999999999 Z" stroke="#a8aeb6" stroke-width="1" fill="#fff"/><path d="M978.6 748.0 L988.1 752.8 L978.6 757.5999999999999 Z" stroke="#a8aeb6" stroke-width="1" fill="#fff"/></svg>
<div class="a" style="left:1213px;top:307px;width:610px;height:685px;background:#fdfdfd;"></div>
<div class="a" style="left:1212px;top:307px;width:1px;height:685px;background:#dcdcdc;"></div>
<div class="a" style="left:1214px;top:309px;width:92px;height:24px;background:#f0f0f0;border:1px solid #d9d9d9;"></div>
<div class="a" style="left:1305px;top:307px;width:97px;height:27px;background:#fefefe;border:1px solid #d9d9d9;border-bottom:none;border-top:none;"></div>
<div class="a" style="left:1401px;top:332px;width:422px;height:1px;background:#d9d9d9;"></div>
<div class="a" style="left:1402px;top:307px;width:421px;height:25px;background:#f0f0f0;"></div>
<span class="t" style="left:1219.80px;top:313.46px;font-size:16px;color:#222;transform:scaleX(0.9520);">Параметры</span>
<span class="t" style="left:1312.60px;top:312.26px;font-size:16px;color:#222;transform:scaleX(0.9439);">Диаграммы</span>
<div class="a" style="left:1218px;top:337px;width:601px;height:290px;background:#fff;border:1px solid #d2d2d2;border-left:2px solid #d8d8d8;"></div>
<div class="a" style="left:1218px;top:626px;width:601px;height:5px;background:#c2c2c2;"></div>
<div class="a" style="left:1218px;top:631px;width:601px;height:355px;background:#fff;border:1px solid #d2d2d2;border-left:2px solid #d8d8d8;border-top:none;"></div>
<svg class="a" style="left:0;top:0" width="1825" height="1012"><line x1="1310" x2="1796.5" y1="514.6" y2="514.6" stroke="#c2c2c2" stroke-width="1" stroke-dasharray="1.3 1.3"/><line x1="1310" x2="1796.5" y1="491.2" y2="491.2" stroke="#c2c2c2" stroke-width="1" stroke-dasharray="1.3 1.3"/><line x1="1310" x2="1796.5" y1="467.8" y2="467.8" stroke="#c2c2c2" stroke-width="1" stroke-dasharray="1.3 1.3"/><line x1="1310" x2="1796.5" y1="444.4" y2="444.4" stroke="#c2c2c2" stroke-width="1" stroke-dasharray="1.3 1.3"/><line x1="1310" x2="1796.5" y1="421.0" y2="421.0" stroke="#c2c2c2" stroke-width="1" stroke-dasharray="1.3 1.3"/><line y1="397.6" y2="538.0" x1="1407.3" x2="1407.3" stroke="#c2c2c2" stroke-width="1" stroke-dasharray="1.3 1.3"/><line y1="397.6" y2="538.0" x1="1504.6" x2="1504.6" stroke="#c2c2c2" stroke-width="1" stroke-dasharray="1.3 1.3"/><line y1="397.6" y2="538.0" x1="1601.9" x2="1601.9" stroke="#c2c2c2" stroke-width="1" stroke-dasharray="1.3 1.3"/><line y1="397.6" y2="538.0" x1="1699.2" x2="1699.2" stroke="#c2c2c2" stroke-width="1" stroke-dasharray="1.3 1.3"/><rect x="1310" y="397.6" width="486.5" height="140.39999999999998" fill="none" stroke="#5a5a5a" stroke-width="1.2"/><line x1="1305" x2="1310" y1="514.6" y2="514.6" stroke="#444" stroke-width="1.2"/><line x1="1305" x2="1310" y1="491.2" y2="491.2" stroke="#444" stroke-width="1.2"/><line x1="1305" x2="1310" y1="467.8" y2="467.8" stroke="#444" stroke-width="1.2"/><line x1="1305" x2="1310" y1="444.4" y2="444.4" stroke="#444" stroke-width="1.2"/><line x1="1305" x2="1310" y1="421.0" y2="421.0" stroke="#444" stroke-width="1.2"/><line y1="538.0" y2="543.0" x1="1407.3" x2="1407.3" stroke="#444" stroke-width="1.2"/><line y1="538.0" y2="543.0" x1="1504.6" x2="1504.6" stroke="#444" stroke-width="1.2"/><line y1="538.0" y2="543.0" x1="1601.9" x2="1601.9" stroke="#444" stroke-width="1.2"/><line y1="538.0" y2="543.0" x1="1699.2" x2="1699.2" stroke="#444" stroke-width="1.2"/><circle cx="1358" cy="424" r="4.4" fill="#d8dcf8" stroke="#3a3ad0" stroke-width="1.2"/><circle cx="1406.3" cy="517.3" r="4.4" fill="#d8dcf8" stroke="#3a3ad0" stroke-width="1.2"/><circle cx="1455" cy="481" r="4.4" fill="#d8dcf8" stroke="#3a3ad0" stroke-width="1.2"/><circle cx="1503.8" cy="445.5" r="4.4" fill="#d8dcf8" stroke="#3a3ad0" stroke-width="1.2"/><circle cx="1552" cy="401.8" r="4.4" fill="#d8dcf8" stroke="#3a3ad0" stroke-width="1.2"/><circle cx="1600.8" cy="434.4" r="4.4" fill="#d8dcf8" stroke="#3a3ad0" stroke-width="1.2"/><circle cx="1650.1" cy="454.7" r="4.4" fill="#d8dcf8" stroke="#3a3ad0" stroke-width="1.2"/><circle cx="1698.7" cy="501.2" r="9.2" fill="#f6ef0a" stroke="#3a0c5c" stroke-width="1.8"/><circle cx="1747.2" cy="532.3" r="4.6" fill="#faf4ee" stroke="#8a5a3a" stroke-width="1.2"/><line x1="1744.0" y1="535.5" x2="1750.4" y2="529.0999999999999" stroke="#8a5a3a" stroke-width="1.2"/><circle cx="1795.7" cy="494.8" r="4.6" fill="#faf4ee" stroke="#8a5a3a" stroke-width="1.2"/><line x1="1792.5" y1="498.0" x2="1798.9" y2="491.6" stroke="#8a5a3a" stroke-width="1.2"/></svg>
<span class="t" style="left:1268.30px;top:530.83px;font-size:14.5px;color:#111;transform:scaleX(0.9050);">9000</span>
<span class="t" style="left:1261.00px;top:507.43px;font-size:14.5px;color:#111;transform:scaleX(0.9051);">10000</span>
<span class="t" style="left:1261.00px;top:484.03px;font-size:14.5px;color:#111;transform:scaleX(0.9299);">11000</span>
<span class="t" style="left:1261.00px;top:460.63px;font-size:14.5px;color:#111;transform:scaleX(0.9051);">12000</span>
<span class="t" style="left:1261.00px;top:437.23px;font-size:14.5px;color:#111;transform:scaleX(0.9051);">13000</span>
<span class="t" style="left:1261.00px;top:413.83px;font-size:14.5px;color:#111;transform:scaleX(0.9051);">14000</span>
<span class="t" style="left:1261.00px;top:390.43px;font-size:14.5px;color:#111;transform:scaleX(0.9051);">15000</span>
<span class="t" style="left:1306.40px;top:548.33px;font-size:14.5px;color:#111;transform:scaleX(0.8913);">0</span>
<span class="t" style="left:1403.70px;top:548.33px;font-size:14.5px;color:#111;transform:scaleX(0.8913);">2</span>
<span class="t" style="left:1501.00px;top:548.33px;font-size:14.5px;color:#111;transform:scaleX(0.8913);">4</span>
<span class="t" style="left:1598.30px;top:548.33px;font-size:14.5px;color:#111;transform:scaleX(0.8913);">6</span>
<span class="t" style="left:1695.60px;top:548.33px;font-size:14.5px;color:#111;transform:scaleX(0.8913);">8</span>
<span class="t" style="left:1789.10px;top:548.33px;font-size:14.5px;color:#111;transform:scaleX(0.8922);">10</span>
<span class="t" style="left:1524.60px;top:565.66px;font-size:16px;color:#111;transform:scaleX(1.0865);">№ обр.</span>
<span class="t" style="left:0.00px;top:-14.39px;font-size:17px;color:#1a5a1a;left:1223px;top:472.3px;transform-origin:0 0;transform:rotate(-90deg);">L</span>
<svg class="a" style="left:0;top:0" width="1825" height="1012"><defs><linearGradient id="gw1" x1="0" y1="0" x2="1" y2="1"><stop offset="0" stop-color="#6c6c6e"/><stop offset="1" stop-color="#8a8a8c"/></linearGradient><linearGradient id="gw2" x1="0" y1="0.4" x2="1" y2="0.7"><stop offset="0" stop-color="#a4a4a0"/><stop offset="0.35" stop-color="#8c8c8e"/><stop offset="1" stop-color="#78787b"/></linearGradient><linearGradient id="gf" x1="0" y1="1" x2="1" y2="0"><stop offset="0" stop-color="#8c8c80"/><stop offset="0.1" stop-color="#b2b2a2"/><stop offset="0.2" stop-color="#bebeae"/><stop offset="0.6" stop-color="#b6b6a6"/><stop offset="1" stop-color="#b8b8a8"/></linearGradient><linearGradient id="gs" x1="0" y1="0.3" x2="1" y2="0"><stop offset="0" stop-color="#cecec2"/><stop offset="0.45" stop-color="#b4b4ae"/><stop offset="1" stop-color="#8e8e92"/></linearGradient><linearGradient id="gt" x1="0" y1="0" x2="1" y2="0.3"><stop offset="0" stop-color="#c6c4b0"/><stop offset="1" stop-color="#a09c84"/></linearGradient><clipPath id="cp"><rect x="1380" y="700" width="283.7" height="200"/></clipPath></defs><g clip-path="url(#cp)"><polygon points="1574.2,774.4 1586.3,771.4 1591.7,778.5 1581.0,790.9" fill="#737377"/><path d="M1478.7 812.3 C1477.1 807.7 1471.9 793.2 1468.9 784.7 C1466.0 776.3 1461.2 766.1 1460.9 761.6 C1460.6 757.1 1464.5 758.6 1467.2 757.7 C1469.8 756.8 1475.3 756.5 1476.9 756.2 L1563.2 797.2 L1527.6 802.5 L1490.3 809.6 Z" fill="url(#gw1)"/><polygon points="1600.6,806.9 1627.2,796.8 1664.6,808.2 1664.6,814.6 1657.5,815.3 1600.6,808.2" fill="#8c8c8e"/><polygon points="1657.5,813.2 1664.6,812.3 1664.6,814.9 1657.5,815.5" fill="#c8c8bc"/><polygon points="1536.5,840.7 1581.0,810.5 1600.6,814.9 1664.6,846.6 1664.6,858.0 1540.1,842.0" fill="url(#gw2)"/><polygon points="1540.1,839.5 1664.6,855.5 1664.6,858.7 1540.1,842.5" fill="#d6d6c8"/><polygon points="1664.6,847.0 1664.6,858.7 1661.9,858.0 1662.5,846.1" fill="#707074"/><path d="M1579.2 795.7 C1581.6 792.7 1588.4 785.2 1593.4 777.6 C1598.5 770.0 1605.3 756.7 1609.5 750.0 C1613.6 743.4 1616.9 739.6 1618.3 737.6 L1633.5 732.8 L1629.0 756.2 L1617.5 788.3 Z" fill="url(#gt)"/><path d="M1404.5 863.7 C1405.5 862.7 1406.9 860.4 1410.2 857.6 C1413.6 854.9 1419.7 850.8 1424.5 847.3 C1429.2 843.8 1434.3 840.0 1438.7 836.6 C1443.1 833.3 1446.7 830.3 1451.1 827.4 C1455.6 824.5 1460.6 821.9 1465.4 819.4 C1470.1 816.9 1474.9 814.6 1479.6 812.6 C1484.4 810.6 1489.7 808.9 1493.8 807.5 C1498.0 806.1 1499.8 805.3 1504.5 804.3 C1509.3 803.2 1516.4 802.0 1522.3 801.1 C1528.2 800.2 1534.2 799.5 1540.1 798.9 C1546.0 798.4 1553.1 798.0 1557.9 797.7 C1562.6 797.3 1562.6 797.5 1568.5 796.8 C1574.5 796.1 1586.3 794.4 1593.4 793.2 C1600.6 792.1 1606.2 791.0 1611.2 790.0 C1616.3 789.1 1621.0 787.5 1623.7 787.4 C1626.4 787.3 1627.0 788.5 1627.6 789.5 C1628.2 790.5 1627.7 792.1 1627.2 793.2 C1626.7 794.3 1625.0 795.6 1624.6 796.1 L1602.3 806.9 L1588.1 809.1 L1575.7 816.7 L1543.6 838.4 L1540.1 843.8 L1525.9 847.7 L1508.1 850.0 L1479.6 856.2 L1442.3 862.6 L1417.4 864.7 L1406.7 864.7 Z" fill="url(#gf)"/><polygon points="1470.7,849.1 1588.1,809.1 1575.7,816.7 1543.6,838.4 1538.3,844.8 1527.6,848.0 1508.1,850.3" fill="url(#gs)"/><path d="M1405.8 862.6 C1408.9 860.2 1419.0 852.1 1424.5 847.9 C1430.0 843.6 1434.3 840.6 1438.7 837.4 C1443.1 834.1 1446.7 831.0 1451.1 828.1 C1455.6 825.2 1460.6 822.4 1465.4 819.9 C1470.1 817.4 1474.9 815.1 1479.6 813.2 C1484.4 811.2 1491.5 809.0 1493.8 808.2" stroke="#6c6c68" stroke-width="1.5" fill="none" opacity=".75"/><path d="M1439.6 847.0 C1440.5 845.9 1443.0 842.7 1444.9 840.7 C1446.9 838.8 1450.1 836.3 1451.1 835.4" stroke="#e2e2d4" stroke-width="2" fill="none" opacity=".85"/></g></svg>
<div class="a" style="left:146px;top:71px;width:1px;height:921px;background:#69748a;"></div>
<span class="t" style="left:38.80px;top:155.10px;font-size:15px;color:#46505e;transform:scaleX(1.0455);text-shadow:1px 1px 0 rgba(190,202,218,.75);">Настройка</span>
<span class="t" style="left:48.25px;top:171.90px;font-size:15px;color:#46505e;transform:scaleX(1.0466);text-shadow:1px 1px 0 rgba(190,202,218,.75);">проекта</span>
<span class="t" style="left:53.60px;top:280.30px;font-size:15px;color:#fff;transform:scaleX(1.0185);">Расчет</span>
<span class="t" style="left:34.30px;top:405.60px;font-size:15px;color:#fff;transform:scaleX(0.9943);">Параметрия</span>
<span class="t" style="left:49.30px;top:529.50px;font-size:15px;color:#46505e;transform:scaleX(1.0809);text-shadow:1px 1px 0 rgba(190,202,218,.75);">Задача</span>
<span class="t" style="left:27.85px;top:547.50px;font-size:15px;color:#46505e;transform:scaleX(1.0804);text-shadow:1px 1px 0 rgba(190,202,218,.75);">оптимизации</span>
<span class="t" style="left:33.45px;top:655.60px;font-size:15px;color:#46505e;transform:scaleX(1.1025);text-shadow:1px 1px 0 rgba(190,202,218,.75);">Результаты</span>
<span class="t" style="left:27.85px;top:673.30px;font-size:15px;color:#46505e;transform:scaleX(1.0804);text-shadow:1px 1px 0 rgba(190,202,218,.75);">оптимизации</span>
<span class="t" style="left:44.20px;top:781.50px;font-size:15px;color:#46505e;transform:scaleX(1.0108);text-shadow:1px 1px 0 rgba(190,202,218,.75);">Протокол</span>
<span class="t" style="left:22.70px;top:907.10px;font-size:15px;color:#fff;transform:scaleX(1.0064);">Аппроксимация</span>
<div class="a" style="left:38.5px;top:204.5px;width:76.5px;height:72px;border-left:1.5px solid #6a6f78;border-top:1.5px solid #6a6f78;border-right:2px solid #fff;border-bottom:2px solid #fff;"></div>
<svg class="a" style="left:0;top:0" width="1825" height="1012"><defs><linearGradient id="bb" x1="0" y1="0" x2="0" y2="1"><stop offset="0" stop-color="#4da0e6"/><stop offset="1" stop-color="#1468b8"/></linearGradient><linearGradient id="bl" x1="0" y1="0" x2="0" y2="1"><stop offset="0" stop-color="#a8cdf0"/><stop offset="1" stop-color="#5c9fe0"/></linearGradient><linearGradient id="gg" x1="0" y1="0" x2="1" y2="1"><stop offset="0" stop-color="#dedede"/><stop offset="1" stop-color="#a8a8a8"/></linearGradient><linearGradient id="dg" x1="0" y1="0" x2="0" y2="1"><stop offset="0" stop-color="#f2f2f2"/><stop offset="1" stop-color="#c4c4c4"/></linearGradient></defs><rect x="68.3" y="92.2" width="13" height="10.5" rx="2.5" fill="url(#dg)" stroke="#a2a8b0" stroke-width="1"/><rect x="86" y="92.2" width="12" height="10.5" rx="2.5" fill="url(#dg)" stroke="#a2a8b0" stroke-width="1"/><rect x="86" y="105" width="12" height="9" rx="2.5" fill="url(#dg)" stroke="#a2a8b0" stroke-width="1"/><rect x="86" y="117" width="12" height="9.2" rx="2.5" fill="url(#dg)" stroke="#a2a8b0" stroke-width="1"/><rect x="69" y="105" width="12" height="9" rx="2.5" fill="url(#dg)" stroke="#a2a8b0" stroke-width="1"/><rect x="81" y="96" width="5" height="2.4" fill="#7d8896"/><rect x="67.19999999999999" y="108.6" width="3.8" height="4.4" rx="1" fill="#d8d8d8" transform="rotate(15 69.1 121.8)"/><rect x="67.19999999999999" y="108.6" width="3.8" height="4.4" rx="1" fill="#d8d8d8" transform="rotate(45 69.1 121.8)"/><rect x="67.19999999999999" y="108.6" width="3.8" height="4.4" rx="1" fill="#d8d8d8" transform="rotate(75 69.1 121.8)"/><rect x="67.19999999999999" y="108.6" width="3.8" height="4.4" rx="1" fill="#d8d8d8" transform="rotate(105 69.1 121.8)"/><rect x="67.19999999999999" y="108.6" width="3.8" height="4.4" rx="1" fill="#d8d8d8" transform="rotate(135 69.1 121.8)"/><rect x="67.19999999999999" y="108.6" width="3.8" height="4.4" rx="1" fill="#d8d8d8" transform="rotate(165 69.1 121.8)"/><rect x="67.19999999999999" y="108.6" width="3.8" height="4.4" rx="1" fill="#d8d8d8" transform="rotate(195 69.1 121.8)"/><rect x="67.19999999999999" y="108.6" width="3.8" height="4.4" rx="1" fill="#d8d8d8" transform="rotate(225 69.1 121.8)"/><rect x="67.19999999999999" y="108.6" width="3.8" height="4.4" rx="1" fill="#d8d8d8" transform="rotate(255 69.1 121.8)"/><rect x="67.19999999999999" y="108.6" width="3.8" height="4.4" rx="1" fill="#d8d8d8" transform="rotate(285 69.1 121.8)"/><rect x="67.19999999999999" y="108.6" width="3.8" height="4.4" rx="1" fill="#d8d8d8" transform="rotate(315 69.1 121.8)"/><rect x="67.19999999999999" y="108.6" width="3.8" height="4.4" rx="1" fill="#d8d8d8" transform="rotate(345 69.1 121.8)"/><circle cx="69.1" cy="121.8" r="8.4" fill="none" stroke="url(#gg)" stroke-width="5.6"/><path d="M83 129 q5 1 8 -3" stroke="#9aa0aa" stroke-width="2.4" fill="none"/><rect x="65.5" y="222" width="35" height="41" rx="3" fill="#f4f7fb" stroke="#dfe6ee" stroke-width="0.6"/><rect x="87" y="224.2" width="14" height="9.8" rx="2.8" fill="url(#bb)" stroke="#1260a8" stroke-width="0.8"/><rect x="87" y="237.3" width="14" height="9.8" rx="2.8" fill="url(#bl)" stroke="#1a6fc0" stroke-width="1.2"/><rect x="87" y="250.4" width="14" height="9.8" rx="2.8" fill="#f8fbff" stroke="#1a6fc0" stroke-width="1.4"/><path d="M94 234 V237.3 M94 247.1 V250.4" stroke="#1a6fc0" stroke-width="1"/><path d="M78 228 H82.5 V226 L86.2 229 L82.5 232 V230 H78 Z" fill="#3c8fd8"/><path d="M78 254.3 H82.5 V252.3 L86.2 255.3 L82.5 258.3 V256.3 H78 Z" fill="#3c8fd8"/><circle cx="69.4" cy="242.7" r="12.4" fill="#b7dc6e" stroke="#4c4c3e" stroke-width="2.2"/><circle cx="69.4" cy="242.7" r="13.6" fill="none" stroke="#8e8e86" stroke-width="0.8"/><path d="M69.4 234.5 V240.6" stroke="#1c1c14" stroke-width="1.6"/><circle cx="69.4" cy="242.6" r="2" fill="#e8f4c8" stroke="#1c1c14" stroke-width="1.1"/><rect x="64.5" y="346.3" width="24.5" height="38.3" rx="3" fill="#f4f7fb" stroke="#dfe6ee" stroke-width="0.6"/><rect x="86" y="347" width="13.2" height="9.6" rx="2.8" fill="url(#bb)" stroke="#1260a8" stroke-width="0.8"/><rect x="86" y="360.4" width="13.2" height="9.6" rx="2.8" fill="url(#bb)" stroke="#1260a8" stroke-width="0.8"/><rect x="86" y="373.6" width="13.2" height="9.6" rx="2.8" fill="url(#bb)" stroke="#1260a8" stroke-width="0.8"/><path d="M92.6 356.6 V360.4 M92.6 370 V373.6" stroke="#1a6fc0" stroke-width="1"/><path d="M75 350.90000000000003 H81.5 V349.0 L85.4 351.8 L81.5 354.6 V352.7 H75 Z" fill="#2f8fe0"/><path d="M75 364.3 H81.5 V362.4 L85.4 365.2 L81.5 368.0 V366.09999999999997 H75 Z" fill="#35b435"/><path d="M75 377.5 H81.5 V375.59999999999997 L85.4 378.4 L81.5 381.2 V379.29999999999995 H75 Z" fill="#e23a5a"/><circle cx="63.6" cy="364.3" r="8.8" fill="#1f6fc4" stroke="#e8f0fa" stroke-width="1"/><circle cx="63.6" cy="362.5" r="6.8" fill="#3f8fe0" opacity=".55"/><circle cx="58.7" cy="472" r="3.6" fill="#dcdcdc" stroke="#a8a8a8" stroke-width="1"/><path d="M58.7 476 V496 q0 4 4 4 H68 M58.7 486 q0 3 4 3 H67" fill="none" stroke="#a0a4aa" stroke-width="2"/><rect x="66" y="476" width="25" height="29" rx="2" fill="url(#dg)" stroke="#a6aab0" stroke-width="1"/><rect x="69" y="479" width="25" height="29" rx="2" fill="url(#dg)" stroke="#a6aab0" stroke-width="1"/><rect x="72" y="482" width="25" height="29" rx="2" fill="url(#dg)" stroke="#a6aab0" stroke-width="1"/><rect x="74" y="484" width="21" height="4" fill="#bdbdbd"/><path d="M77 497 L82 502.5 L92 490.5" fill="none" stroke="#8c8c8c" stroke-width="3"/><rect x="55" y="598" width="24" height="32" rx="2" fill="url(#dg)" stroke="#a6aab0" stroke-width="1"/><rect x="58" y="601" width="24" height="32" rx="2" fill="url(#dg)" stroke="#a6aab0" stroke-width="1"/><rect x="61" y="604" width="24" height="32" rx="2" fill="url(#dg)" stroke="#a6aab0" stroke-width="1"/><path d="M64 622 l4 -3 3 4 3 -6 4 3" fill="none" stroke="#9a9a9a" stroke-width="1.2"/><path d="M97.5 604.5 L83 620.5" stroke="#b0b0b0" stroke-width="3.4"/><path d="M83 620.5 L80.5 624.5" stroke="#8a8a8a" stroke-width="2"/><path d="M54 741 L60 733 H94 L99.5 741 V757 q0 5 -5 5 H59 q-5 0 -5 -5 Z" fill="#a0a0a0"/><rect x="60.0" y="718.0" width="22" height="26" rx="1.5" fill="#e6e6e6" stroke="#b4b4b4" stroke-width="0.8"/><rect x="62.6" y="720.2" width="22" height="26" rx="1.5" fill="#e6e6e6" stroke="#b4b4b4" stroke-width="0.8"/><rect x="65.2" y="722.4" width="22" height="26" rx="1.5" fill="#e6e6e6" stroke="#b4b4b4" stroke-width="0.8"/><rect x="67.8" y="724.6" width="22" height="26" rx="1.5" fill="#e6e6e6" stroke="#b4b4b4" stroke-width="0.8"/><rect x="70.4" y="726.8" width="22" height="26" rx="1.5" fill="#e6e6e6" stroke="#b4b4b4" stroke-width="0.8"/><rect x="72.5" y="729" width="20" height="22" rx="1.5" fill="#ededed" stroke="#b4b4b4" stroke-width="0.8"/><rect x="76" y="731.5" width="14" height="4" fill="#b8b8b8"/><path d="M54 745 H71 V752 H99.5 V757 q0 5 -5 5 H59 q-5 0 -5 -5 Z" fill="url(#gg)"/><rect x="55" y="848" width="22" height="30" rx="2" fill="#e8eef6" stroke="#b8c4d4" stroke-width="0.8"/><rect x="58" y="851" width="24.5" height="32.5" rx="2" fill="#fbfcfe" stroke="#b8c4d4" stroke-width="0.8"/><rect x="65" y="851.5" width="17" height="4.6" fill="#62c23a"/><path d="M62 862 H80 M62 868 H80 M62 874 H80 M67 858 V880 M73 858 V880" stroke="#dfe5ee" stroke-width="0.7"/><path d="M62.5 877 q3 -9 6 -6 t6 -5 t5.5 -7" fill="none" stroke="#1a1ae0" stroke-width="1.8"/><circle cx="63" cy="877" r="1.1" fill="#e02020"/><circle cx="69" cy="870.5" r="1.1" fill="#e02020"/><circle cx="75" cy="866" r="1.1" fill="#e02020"/><rect x="80.5" y="864.5" width="17" height="21.5" rx="2" fill="#d4d4d4" stroke="#8e8e8e" stroke-width="1"/><rect x="83" y="867" width="12" height="4.4" fill="#9ed48a" stroke="#6a9a5a" stroke-width="0.5"/><rect x="83.2" y="873.4" width="3" height="2.6" fill="#f4f4f4"/><rect x="87.4" y="873.4" width="3" height="2.6" fill="#f4f4f4"/><rect x="91.60000000000001" y="873.4" width="3" height="2.6" fill="#5aa0d8"/><rect x="83.2" y="877.1999999999999" width="3" height="2.6" fill="#f4f4f4"/><rect x="87.4" y="877.1999999999999" width="3" height="2.6" fill="#f4f4f4"/><rect x="91.60000000000001" y="877.1999999999999" width="3" height="2.6" fill="#5aa0d8"/><rect x="83.2" y="881.0" width="3" height="2.6" fill="#f4f4f4"/><rect x="87.4" y="881.0" width="3" height="2.6" fill="#f4f4f4"/><rect x="91.60000000000001" y="881.0" width="3" height="2.6" fill="#5aa0d8"/></svg>
<span class="t" style="left:60.12px;top:357.62px;font-size:12.5px;color:#fff;font-weight:bold;">a</span>
<svg class="a" style="left:0;top:0" width="1825" height="1012"><circle cx="52.3" cy="50.3" r="9.8" fill="#f8fafc" stroke="#a8aeb8" stroke-width="1.1"/><path d="M71 40.5 H84.5 L89.5 45.5 V61 H71 Z" fill="#fff" stroke="#8a96a6" stroke-width="1"/><path d="M84.5 40.5 V45.5 H89.5" fill="none" stroke="#8a96a6" stroke-width="1"/><path d="M73 44 H80.5 M73 48.6 H80.5 M73 53.2 H80.5 M73 57.8 H80.5" stroke="#5a5a5a" stroke-width="1.6"/><path d="M84 45.8 Q85.2 44.6 86.4 45.8 L85.7 55 L84.7 55 Z" fill="#36689e" stroke="#36689e" stroke-width="1"/><circle cx="85.2" cy="57.8" r="1.4" fill="#36689e"/><path d="M1800.8 84.3 V88.5 H1796.2 M1804.6 84.3 V88.5 H1808.8 M1800.8 96.6 V91.9 H1796.2 M1804.6 96.6 V91.9 H1808.8" fill="none" stroke="#333" stroke-width="1.6"/><path d="M1166.2 93 H1180.5 M1174.1 85.2 L1180.7 93 L1174.1 101.2" fill="none" stroke="#555" stroke-width="1.7" stroke-linecap="round"/><path d="M1486.2 93 H1500.5 M1494.1 85.2 L1500.7 93 L1494.1 101.2" fill="none" stroke="#8a8a8a" stroke-width="1.7" stroke-linecap="round"/><rect x="1666.8" y="261.2" width="2.8" height="3.4" fill="#8c8c8c" transform="rotate(0 1668.2 268.2)"/><rect x="1666.8" y="261.2" width="2.8" height="3.4" fill="#8c8c8c" transform="rotate(45 1668.2 268.2)"/><rect x="1666.8" y="261.2" width="2.8" height="3.4" fill="#8c8c8c" transform="rotate(90 1668.2 268.2)"/><rect x="1666.8" y="261.2" width="2.8" height="3.4" fill="#8c8c8c" transform="rotate(135 1668.2 268.2)"/><rect x="1666.8" y="261.2" width="2.8" height="3.4" fill="#8c8c8c" transform="rotate(180 1668.2 268.2)"/><rect x="1666.8" y="261.2" width="2.8" height="3.4" fill="#8c8c8c" transform="rotate(225 1668.2 268.2)"/><rect x="1666.8" y="261.2" width="2.8" height="3.4" fill="#8c8c8c" transform="rotate(270 1668.2 268.2)"/><rect x="1666.8" y="261.2" width="2.8" height="3.4" fill="#8c8c8c" transform="rotate(315 1668.2 268.2)"/><circle cx="1668.2" cy="268.2" r="3.6" fill="none" stroke="#8c8c8c" stroke-width="2.6"/></svg>
<span class="t" style="left:47.57px;top:42.01px;font-size:17px;color:#3a6a9c;">?</span>
<div class="a" style="left:4px;top:992px;width:1819px;height:18px;background:#f0f0f0;"></div>
<div class="a" style="left:4px;top:991px;width:1819px;height:1px;background:#d0d0d0;"></div>
<div class="a" style="left:4px;top:992px;width:1819px;height:18px;overflow:hidden;background:#f0f0f0">
<div class="a" style="left:96.5px;top:4px;width:107px;height:14px;background:#e6e6e6;border:1px solid #bcbcbc;"></div>
<div class="a" style="left:96.5px;top:4px;width:95px;height:14px;background:linear-gradient(90deg,#2fc04a 0%,#06b025 20%,#06b025 100%);"></div>
<span class="t" style="left:209.00px;top:4.80px;font-size:15px;color:#000;transform:scaleX(0.9849);">Итераций: 9/10</span>
<span class="t" style="left:339.20px;top:4.80px;font-size:15px;color:#000;transform:scaleX(0.9820);">Обращений: 0</span>
<span class="t" style="left:469.40px;top:4.80px;font-size:15px;color:#000;">Параллельных процессов: 1</span>
<span class="t" style="left:1552.20px;top:4.80px;font-size:15px;color:#000;transform:scaleX(1.0242);">Автоматический обмен данными</span>
<div class="a" style="left:92.5px;top:3px;width:1px;height:15px;background:#d8d8d8;"></div>
<div class="a" style="left:455.5px;top:3px;width:1px;height:15px;background:#d8d8d8;"></div>
<div class="a" style="left:682.5px;top:3px;width:1px;height:15px;background:#d8d8d8;"></div>
<div class="a" style="left:914px;top:3px;width:1px;height:15px;background:#d8d8d8;"></div>
<div class="a" style="left:1101px;top:3px;width:1px;height:15px;background:#d8d8d8;"></div>
<div class="a" style="left:1547.5px;top:3px;width:1px;height:15px;background:#d8d8d8;"></div>
<div class="a" style="left:1799px;top:3px;width:1px;height:15px;background:#d8d8d8;"></div>
</div>
</body></html>
